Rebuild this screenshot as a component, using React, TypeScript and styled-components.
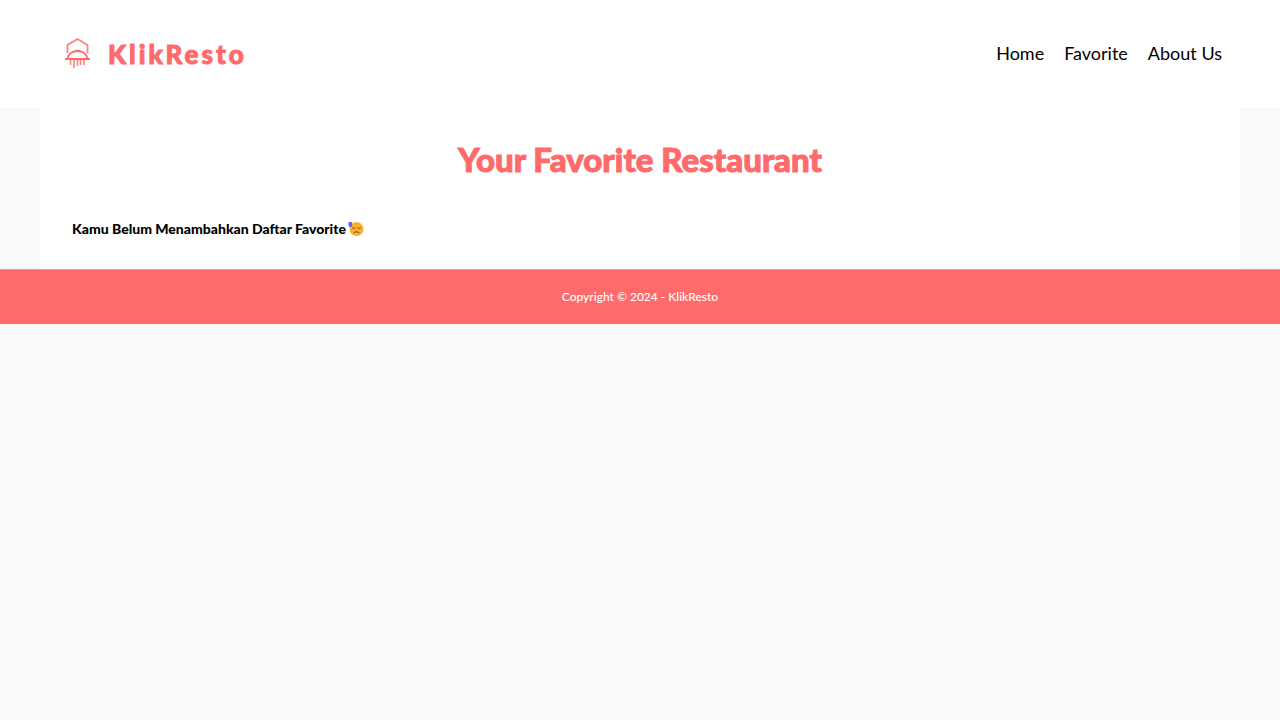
import React from "react";
import styled, { createGlobalStyle } from "styled-components";

const coral = "#ff6b6b";

const GlobalStyle = createGlobalStyle`
  *, *::before, *::after { box-sizing: border-box; }
  body {
    margin: 0;
    background: #f9f9f9;
    color: #000;
    font-family: Lato, "Liberation Sans", sans-serif;
  }
`;

const Header = styled.header`
  display: flex;
  align-items: center;
  justify-content: space-between;
  min-height: 108px;
  padding: 0 58px 0 62px;
  background: #fff;
`;

const Brand = styled.a`
  display: flex;
  align-items: center;
  gap: 14px;
  color: ${coral};
  font-size: 26px;
  font-weight: 900;
  line-height: 36px;
  letter-spacing: 3px;
  text-decoration: none;
  -webkit-text-stroke: 1px ${coral};
`;

const Logo = styled.svg`
  width: 32px;
  height: 32px;
  fill: none;
  stroke: currentColor;
  stroke-width: 1.8;
`;

const NavList = styled.ul`
  display: flex;
  gap: 20px;
  margin: 0;
  padding: 0 0 2px;
  list-style: none;
`;

const NavLink = styled.a`
  color: #000;
  font-size: 18px;
  line-height: 24px;
  text-decoration: none;
`;

const Main = styled.main`
  max-width: 1200px;
  margin: 0 auto;
  padding: 32px;
  background: #fff;
`;

const Title = styled.h1`
  margin: 0 0 42px;
  color: ${coral};
  font-size: 33px;
  font-weight: 900;
  line-height: 38px;
  text-align: center;
  -webkit-text-stroke: 1px ${coral};
`;

const EmptyMessage = styled.p`
  display: flex;
  align-items: center;
  gap: 2px;
  margin: 0;
  font-size: 14px;
  font-weight: 900;
  line-height: 17px;
`;

const Emoji = styled.svg`
  width: 16px;
  height: 16px;
`;

const Footer = styled.footer`
  padding: 18px 16px 19px;
  border-top: 1px solid #ff8e8e;
  background: ${coral};
  color: #fff;
  font-size: 12px;
  font-weight: 500;
  line-height: 17px;
  text-align: center;
`;

const links = ["Home", "Favorite", "About Us"];

export default function App() {
  return (
    <>
      <GlobalStyle />
      <Header>
        <Brand href="#home">
          <Logo viewBox="0 0 32 32" aria-hidden="true">
            <path d="M5.5 15V7L15.5 1L25.5 7V15" opacity="0.85" />
            <path d="M5.5 20.5C6.5 16 10.5 13 15.5 13s9 3 10 7.5" />
            <path d="M12 13.5Q15.5 9.500 19 13.500Z" fill="currentColor" stroke="none" />
            <path d="M3 21h25" strokeWidth="2" />
            <path d="M8.5 22v5M12 22v8M15.5 22v6M18.5 22v5M22 22v5" strokeWidth="1.6" opacity="0.85" />
          </Logo>
          <span>KlikResto</span>
        </Brand>
        <nav aria-label="Main">
          <NavList>
            {links.map((label) => (
              <li key={label}>
                <NavLink href={`#${label.toLowerCase().replace(" ", "-")}`}>{label}</NavLink>
              </li>
            ))}
          </NavList>
        </nav>
      </Header>
      <Main>
        <Title>Your Favorite Restaurant</Title>
        <EmptyMessage>
          <span>Kamu Belum Menambahkan Daftar Favorite</span>
          <Emoji viewBox="0 0 16 16" role="img" aria-label="Downcast face with sweat">
            <circle cx="8.5" cy="8" r="7" fill="#fcaf32" />
            <path d="M0.5 1.5Q2.5 0 4 1.5V5Q2.5 7 0.5 5Z" fill="#5c63f5" />
            <path
              d="M4.5 7Q5.5 8 7 7M10 7Q11.5 8 12.5 7M6 11.5Q8.5 9.5 11 11.5"
              fill="none"
              stroke="#6b3f1d"
              strokeWidth="0.9"
              strokeLinecap="round"
            />
          </Emoji>
        </EmptyMessage>
      </Main>
      <Footer>Copyright © 2024 - KlikResto</Footer>
    </>
  );
}
